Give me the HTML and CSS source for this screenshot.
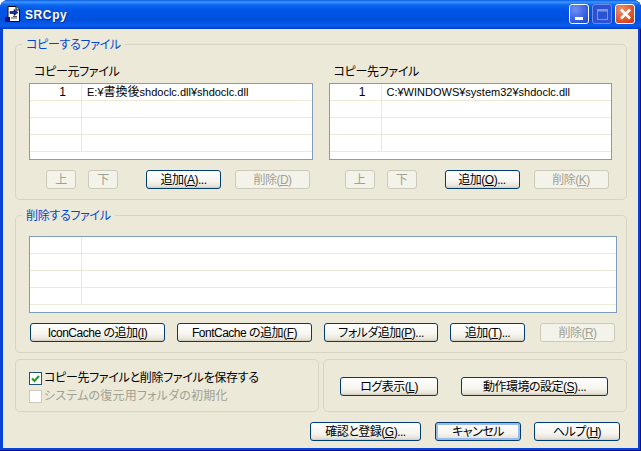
FILE: index.html
```html
<!DOCTYPE html>
<html lang="ja">
<head>
<meta charset="utf-8">
<title>SRCpy</title>
<link rel="stylesheet" href="styles.css">
</head>
<body>
<div class="window">
  <header class="titlebar">
    <svg class="appicon" width="16" height="16" viewBox="0 0 16 16">
      <path d="M3 0.5H11L14.5 4V15.5H3Z" fill="#fff" stroke="#000"/>
      <path d="M11 .5V4H14.5" fill="#ddd" stroke="#000"/>
      <path d="M5 5.5H9V3.5L13 6.5L9 9.5V7.5H5Z" fill="#1a2fa8" stroke="#000" stroke-width=".6"/>
      <path d="M6 12H12M8 10.5H12" stroke="#555"/>
      <rect x="0" y="11" width="5" height="5" fill="#10108c"/>
    </svg>
    <span class="apptitle">SRCpy</span>
    <div class="controls">
      <div class="ctl ctl-min"><svg width="19" height="20" viewBox="0 0 19 20"><rect x="5" y="13" width="8" height="3" fill="#fff"/></svg></div>
      <div class="ctl ctl-max"><svg width="19" height="20" viewBox="0 0 19 20"><rect x="4.5" y="5.5" width="10" height="10" fill="none" stroke="#7f97e6"/><rect x="4" y="5" width="11" height="2.5" fill="#7f97e6"/></svg></div>
      <div class="ctl ctl-close"><svg width="19" height="20" viewBox="0 0 19 20"><path d="M5 5.5L14 14.5M14 5.5L5 14.5" stroke="#fff" stroke-width="2.6" fill="none"/></svg></div>
    </div>
  </header>
  <main class="client">
    <section class="group group-copy">
      <span class="legend">コピーするファイル</span>
      <div class="copy-cols">
        <div class="copy-col">
          <div class="collabel">コピー元ファイル</div>
          <div class="grid">
            <div class="row"><div class="c1">1</div><div class="c2">E:¥<span class="kanji">書換後</span>shdoclc.dll¥shdoclc.dll</div></div>
            <div class="row"><div class="c1"></div><div class="c2"></div></div>
            <div class="row"><div class="c1"></div><div class="c2"></div></div>
            <div class="row"><div class="c1"></div><div class="c2"></div></div>
          </div>
          <div class="btnrow btnrow-a">
            <button class="btn w-s" disabled>上</button>
            <button class="btn w-s" disabled>下</button>
            <button class="btn w-m gap-l">追加(<u>A</u>)...</button>
            <button class="btn w-m gap-m" disabled>削除(<u>D</u>)</button>
          </div>
        </div>
        <div class="copy-col">
          <div class="collabel">コピー先ファイル</div>
          <div class="grid">
            <div class="row"><div class="c1">1</div><div class="c2">C:¥WINDOWS¥system32¥shdoclc.dll</div></div>
            <div class="row"><div class="c1"></div><div class="c2"></div></div>
            <div class="row"><div class="c1"></div><div class="c2"></div></div>
            <div class="row"><div class="c1"></div><div class="c2"></div></div>
          </div>
          <div class="btnrow btnrow-b">
            <button class="btn w-s" disabled>上</button>
            <button class="btn w-s" disabled>下</button>
            <button class="btn w-m gap-l">追加(<u>O</u>)...</button>
            <button class="btn w-m gap-m" disabled>削除(<u>K</u>)</button>
          </div>
        </div>
      </div>
    </section>
    <section class="group group-del">
      <span class="legend">削除するファイル</span>
      <div class="grid grid-wide">
        <div class="row"><div class="c1"></div><div class="c2"></div></div>
        <div class="row"><div class="c1"></div><div class="c2"></div></div>
        <div class="row"><div class="c1"></div><div class="c2"></div></div>
        <div class="row"><div class="c1"></div><div class="c2"></div></div>
      </div>
      <div class="btnrow btnrow-del">
        <button class="btn w-xl">IconCache の追加(<u>I</u>)</button>
        <button class="btn w-xl">FontCache の追加(<u>F</u>)</button>
        <button class="btn w-l">フォルダ追加(<u>P</u>)...</button>
        <button class="btn w-m">追加(<u>T</u>)...</button>
        <button class="btn w-m gap-x" disabled>削除(<u>R</u>)</button>
      </div>
    </section>
    <div class="lower">
      <section class="group group-opts">
        <label class="check"><span class="box"><svg width="11" height="11" viewBox="0 0 11 11"><path d="M2 5.5L4.5 8L9 3" fill="none" stroke="#21a121" stroke-width="2.2"/></svg></span>コピー先ファイルと削除ファイルを保存する</label>
        <label class="check check-off"><span class="box"></span>システムの復元用フォルダの初期化</label>
      </section>
      <section class="group group-tools">
        <button class="btn w-log">ログ表示(<u>L</u>)</button>
        <button class="btn w-env">動作環境の設定(<u>S</u>)...</button>
      </section>
    </div>
    <footer class="actions">
      <button class="btn w-ok">確認と登録(<u>G</u>)...</button>
      <button class="btn w-act focus">キャンセル</button>
      <button class="btn w-act">ヘルプ(<u>H</u>)</button>
    </footer>
  </main>
</div>
</body>
</html>
```
FILE: styles.css
```css
* { box-sizing: border-box; }
html, body { margin: 0; padding: 0; background: #fff; }
body { width: 641px; height: 451px; overflow: hidden; font: 12px/14px "Liberation Sans", "Noto Sans CJK JP", sans-serif; font-feature-settings: "palt"; letter-spacing: -0.3px; color: #000; }

.window { width: 641px; height: 451px; display: flex; flex-direction: column; border-radius: 8px 8px 0 0; overflow: hidden; background: #0842d8; padding: 0 3px 3px; box-shadow: inset 0 -1px #00138c, inset -1px 0 #00138c; }

.titlebar { height: 29px; margin: 0 -3px; padding: 0 6px 0 5px; display: flex; align-items: center; gap: 4px;
  background: linear-gradient(180deg, #0a5be0 0, #3d95ff 2px, #0a66f0 5px, #0055e6 10px, #0050de 20px, #0a5cf0 26px, #003cc0 29px); }
.appicon { flex: none; margin-top: -2px; }
.apptitle { font: bold 12px/16px "Liberation Sans", sans-serif; color: #fff; letter-spacing: 0.6px; text-shadow: 1px 1px #0a2a8c; }
.controls { margin-left: auto; display: flex; gap: 3px; margin-top: -1px; }
.ctl { width: 20px; height: 20px; border: 1px solid #fff; border-radius: 3px; display: flex; align-items: center; justify-content: center; }
.ctl svg { display: block; flex: none; }
.ctl-min { background: radial-gradient(circle at 30% 25%, #6f8ff0, #2a55dc 75%, #1d3fc0); }
.ctl-max { background: #2a52d4; border-color: #6d8be6; }
.ctl-close { background: radial-gradient(circle at 30% 25%, #ee8f6c, #dc4b22 70%, #c23412); }

.client { flex: 1; background: #ece9d8; display: flex; flex-direction: column; padding: 15px 11px 0 12px; min-height: 0; }

.group { position: relative; border: 1px solid #d8d4c4; border-radius: 5px; }
.legend { position: absolute; left: 6px; top: -7px; padding: 0 4px; background: #ece9d8; color: #0046d5; }

.group-copy { height: 156px; padding: 19px 14px 0 13px; }
.copy-cols { display: flex; gap: 16px; }
.copy-col { width: 284px; }
.collabel { height: 19px; padding: 1px 0 0 5px; }

.grid { border: 1px solid #7f9db9; background: #fff; height: 77px; overflow: hidden; }
.row { height: 17px; display: flex; border-bottom: 1px solid #ece9d8; font-size: 11px; letter-spacing: 0; }
.c1 { width: 52px; flex: none; border-right: 1px solid #ece9d8; text-align: right; padding-right: 15px; line-height: 17px; font-size: 12px; }
.c2 { flex: 1; padding-left: 5px; line-height: 17px; }
.kanji { font-size: 12px; }
.grid-wide { width: 588px; height: 77px; }

.btnrow { display: flex; gap: 12px; margin-top: 10px; }
.btnrow-a { padding-left: 17px; }
.btnrow-b { padding-left: 16px; }
.gap-l { margin-left: 16px; }
.gap-m { margin-left: 2px; }

.group-del { height: 138px; margin-top: 15px; padding: 20px 10px 0 13px; }
.btnrow-del { padding-left: 1px; }
.gap-x { margin-left: 3px; }

.btn { height: 19px; padding: 0; font: inherit; font-feature-settings: inherit; letter-spacing: -0.5px; color: #000; border: 1px solid #003c74; border-radius: 3px; background: linear-gradient(180deg, #fff 0, #f6f5ef 60%, #e8e5da 88%, #cfc9ba 100%); white-space: nowrap; flex: none; }
.btn:disabled { color: #a1a192; border-color: #cdcabb; background: #f4f3ea; }
.btn.focus { box-shadow: inset 0 0 0 2px #9dbbe8; }
.w-s { width: 30px; }
.w-m { width: 75px; }
.w-l { width: 114px; }
.w-xl { width: 135px; }
.w-log { width: 98px; }
.w-env { width: 147px; }
.w-ok { width: 111px; margin-right: 1px; }
.w-act { width: 86px; }

.lower { display: flex; gap: 4px; margin-top: 6px; height: 53px; }
.group-opts { width: 304px; padding: 12px 0 0 13px; display: flex; flex-direction: column; gap: 5px; }
.group-tools { flex: 1; display: flex; align-items: flex-start; gap: 23px; padding: 17px 0 0 16px; }
.check { display: flex; align-items: center; height: 13px; line-height: 15px; }
.box { width: 13px; height: 13px; margin-right: 2px; border: 1px solid #1c5180; background: #fff; display: flex; align-items: center; justify-content: center; flex: none; }
.check-off { color: #a1a192; letter-spacing: 0.2px; }
.check-off .box { border-color: #cdcabb; }

.actions { display: flex; justify-content: flex-end; gap: 13px; margin-top: 10px; padding-right: 7px; }
```
